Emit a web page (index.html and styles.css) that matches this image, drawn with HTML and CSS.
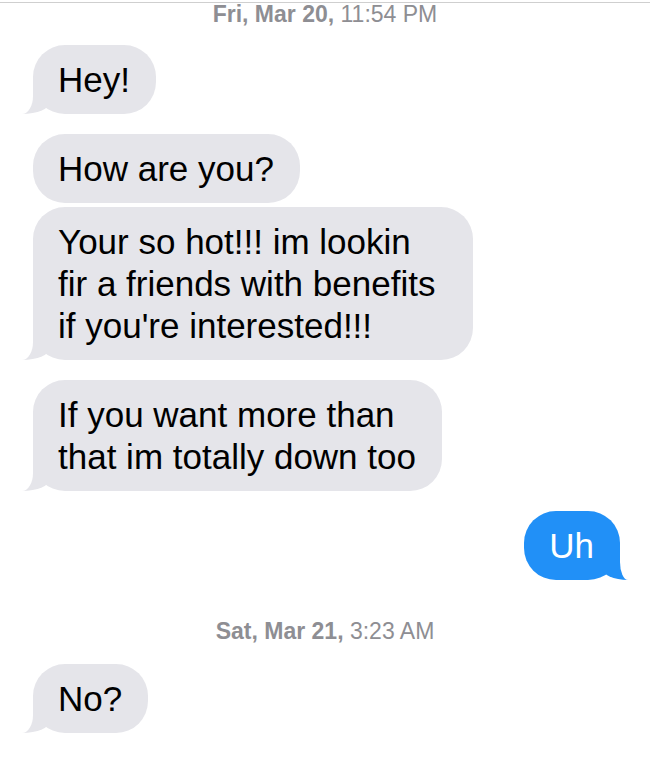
FILE: index.html
```html
<html>
<head>
<link rel="stylesheet" href="styles.css">
</head>
<body>
<div class="thread">
    <p class="stamp"><b>Fri, Mar 20,</b> 11:54 PM</p>

    <div class="group">
        <div class="bubble tail">Hey!</div>
    </div>
    <div class="group">
        <div class="bubble">How are you?</div>
        <div class="bubble tail wide">Your so hot!!! im lookin<br>fir a friends with benefits<br>if you're interested!!!</div>
    </div>
    <div class="group">
        <div class="bubble tail">If you want more than<br>that im totally down too</div>
    </div>
    <div class="group out">
        <div class="bubble tail">Uh</div>
    </div>

    <p class="stamp late"><b>Sat, Mar 21,</b> 3:23 AM</p>

    <div class="group">
        <div class="bubble tail">No?</div>
    </div>
</div>
</body>
</html>
```

FILE: styles.css
```css
body {
    margin: 0;
    padding-top: 2px;
    background: white;
    font-family: "Liberation Sans", Arial, sans-serif;
}
.thread {
    border-top: 1px solid #cfcfcf;
}
.stamp {
    margin: 0;
    text-align: center;
    font-size: 23px;
    line-height: 22px;
    color: #8e8e93;
}
.stamp.late {
    margin: 40px 0 22px;
}
.group {
    display: flex;
    flex-direction: column;
    align-items: flex-start;
    gap: 4px;
    margin-top: 20px;
    padding: 0 30px 0 33px;
}
.group.out {
    align-items: flex-end;
}
.bubble {
    position: relative;
    background: #e5e5ea;
    color: black;
    font-size: 35px;
    line-height: 42px;
    padding: 14px 26px 13px 25px;
    border-radius: 32px;
}
.wide {
    width: 440px;
    box-sizing: border-box;
}
.out .bubble {
    background: #2190f7;
    color: white;
}

/* the little tail under the last bubble of a group */
.tail::before,
.tail::after {
    content: "";
    position: absolute;
    bottom: 0;
    height: 34px;
}
.tail::before {
    left: -11px;
    width: 28px;
    background: #e5e5ea;
    border-bottom-right-radius: 28px 12px;
}
.tail::after {
    left: -30px;
    width: 30px;
    background: white;
    border-bottom-right-radius: 11px 18px;
}
.out .tail::before {
    left: auto;
    right: -8px;
    width: 26px;
    background: #2190f7;
    border-bottom-right-radius: 0;
    border-bottom-left-radius: 26px 12px;
}
.out .tail::after {
    left: auto;
    right: -30px;
    border-bottom-right-radius: 0;
    border-bottom-left-radius: 8px 18px;
}
```
